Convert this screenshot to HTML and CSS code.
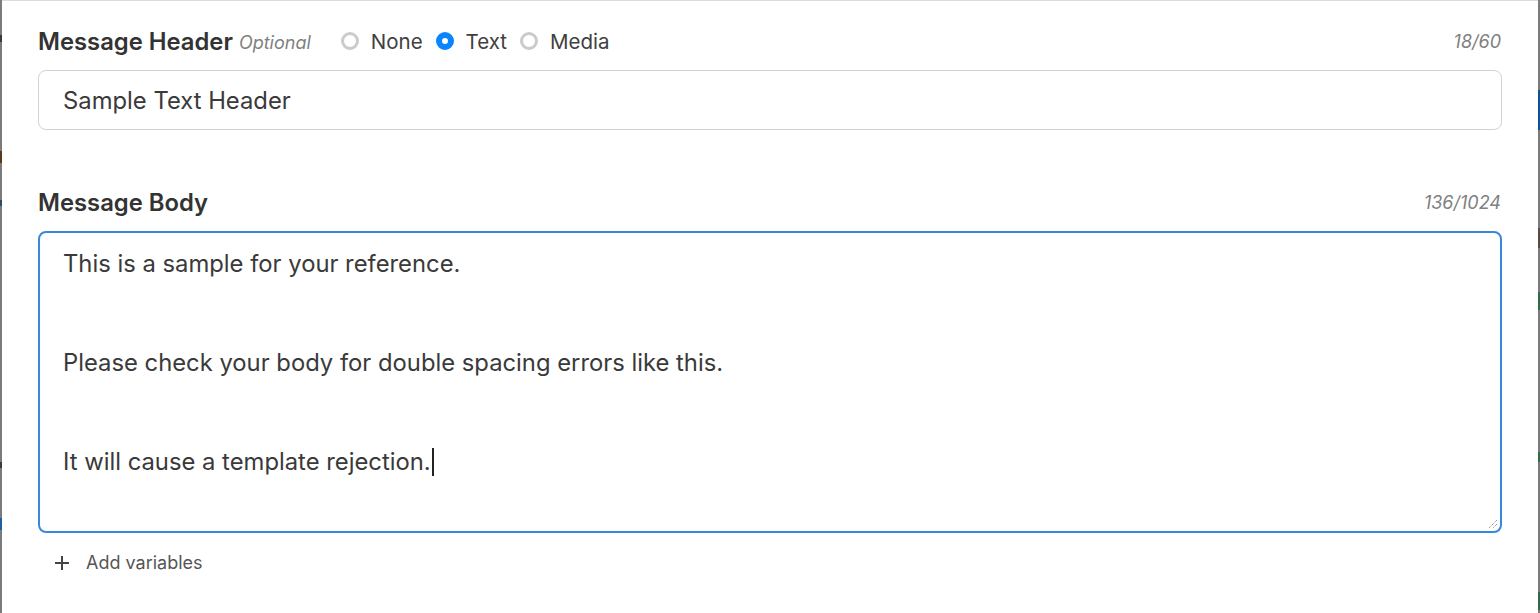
FILE: index.html
```html
<!DOCTYPE html>
<html lang="en">
<head>
<meta charset="utf-8">
<title>Message Template</title>
<link rel="stylesheet" href="styles.css">
</head>
<body>
<div class="screen">
  <div class="edge edge-left"></div>
  <main class="modal">
    <section class="field">
      <div class="field-head">
        <div class="head-left">
          <span class="label">Message Header</span>
          <span class="optional">Optional</span>
          <div class="radios">
            <label class="radio"><span class="dot"></span>None</label>
            <label class="radio"><span class="dot checked"></span>Text</label>
            <label class="radio"><span class="dot"></span>Media</label>
          </div>
        </div>
        <span class="counter">18/60</span>
      </div>
      <div class="input">Sample Text Header</div>
    </section>

    <section class="field field-body">
      <div class="field-head">
        <span class="label">Message Body</span>
        <span class="counter">136/1024</span>
      </div>
      <div class="textarea">
        <div class="line">This is a sample for your reference.</div>
        <div class="line"></div>
        <div class="line"></div>
        <div class="line">Please check your body for double spacing errors like this.</div>
        <div class="line"></div>
        <div class="line"></div>
        <div class="line">It will cause a template rejection.<span class="caret"></span></div>
        <svg class="grip" width="12" height="12" viewBox="0 0 12 12"><path d="M11 3 L3 11 M11 7 L7 11" stroke="#777" stroke-width="1" stroke-dasharray="1 1" fill="none"/></svg>
      </div>
      <div class="add-vars">
        <svg width="16" height="16" viewBox="0 0 16 16"><path d="M8 1 V15 M1 8 H15" stroke="#444" stroke-width="2" fill="none"/></svg>
        <span>Add variables</span>
      </div>
    </section>
  </main>
  <div class="edge edge-right"></div>
</div>
</body>
</html>
```

FILE: styles.css
```css
html, body {
  margin: 0;
  padding: 0;
  background: #ffffff;
}

body {
  font-family: Inter, "Noto Sans", "Liberation Sans", sans-serif;
  color: #333333;
  width: 1540px;
  height: 613px;
  overflow: hidden;
}

.screen {
  display: flex;
  height: 613px;
}

.edge {
  width: 2px;
  flex: none;
  background: #7b7b7b;
}

.edge-left {
  background:
    linear-gradient(to bottom,
      #7b7b7b 0, #7b7b7b 35px, #3a3a3a 35px, #3a3a3a 42px,
      #7b7b7b 42px, #7b7b7b 151px, #5a3a1a 151px, #5a3a1a 163px,
      #7b7b7b 163px, #7b7b7b 200px, #2d4a6a 200px, #2d4a6a 206px,
      #7b7b7b 206px, #7b7b7b 462px, #3a3a3a 462px, #3a3a3a 468px,
      #7b7b7b 468px, #7b7b7b 518px, #1f5fa0 518px, #1f5fa0 530px,
      #7b7b7b 530px);
}

.edge-right {
  background:
    linear-gradient(to bottom,
      #7b7b7b 0, #7b7b7b 90px, #104f94 90px, #104f94 130px,
      #7b7b7b 130px, #7b7b7b 228px, #5a4a44 228px, #5a4a44 248px,
      #7b7b7b 248px, #7b7b7b 292px, #2f6a4a 292px, #2f6a4a 310px,
      #7b7b7b 310px, #7b7b7b 452px, #2f6a4a 452px, #2f6a4a 462px,
      #7b7b7b 462px, #7b7b7b 592px, #2f6a4a 592px, #2f6a4a 610px,
      #7b7b7b 610px);
}

.modal {
  flex: 1;
  border-top: 1px solid #dcdcdc;
  padding: 0 36px 0 36px;
  display: flex;
  flex-direction: column;
}

.field {
  display: flex;
  flex-direction: column;
}

.field-head {
  display: flex;
  justify-content: space-between;
  align-items: center;
  height: 30px;
}

.field:first-child .field-head {
  margin-top: 25px;
  margin-bottom: 14px;
}

.field-body .field-head {
  margin-top: 57px;
  margin-bottom: 14px;
}

.head-left {
  display: flex;
  align-items: center;
}

.label {
  font-size: 23.8px;
  font-weight: 600;
  color: #333333;
}

.optional {
  font-size: 18px;
  font-style: italic;
  color: #808080;
  margin-left: 6px;
  margin-top: 3px;
}

.radios {
  display: flex;
  align-items: center;
  margin-left: 30px;
}

.radio {
  display: flex;
  align-items: center;
  font-size: 20.5px;
  color: #404040;
  margin-right: 13px;
}

.dot {
  width: 18px;
  height: 18px;
  box-sizing: border-box;
  border: 3px solid #cbcbcb;
  border-radius: 50%;
  margin-right: 12px;
  background: #fff;
}

.dot.checked {
  border: 6px solid #0a84ff;
  background: #fff;
}

.counter {
  font-size: 18px;
  font-style: italic;
  color: #808080;
  margin-right: 1px;
}

.input {
  height: 60px;
  box-sizing: border-box;
  border: 1px solid #d2d2d2;
  border-radius: 8px;
  padding: 0 24px;
  display: flex;
  align-items: center;
  font-size: 23.8px;
  color: #3a3a3a;
}

.textarea {
  position: relative;
  height: 302px;
  box-sizing: border-box;
  border: 2px solid #3a89d8;
  border-radius: 8px;
  padding: 14px 23px 0 23px;
  font-size: 23.8px;
  color: #3a3a3a;
}

.line {
  height: 33px;
  line-height: 33px;
  white-space: pre;
}

.caret {
  display: inline-block;
  width: 2px;
  height: 28px;
  background: #222;
  vertical-align: middle;
  margin-left: 1px;
  margin-top: -4px;
}

.grip {
  position: absolute;
  right: 2px;
  bottom: 2px;
}

.add-vars {
  display: flex;
  align-items: center;
  margin-top: 19px;
  margin-left: 16px;
  font-size: 18px;
  color: #555555;
}

.add-vars svg {
  margin-right: 16px;
}
```
